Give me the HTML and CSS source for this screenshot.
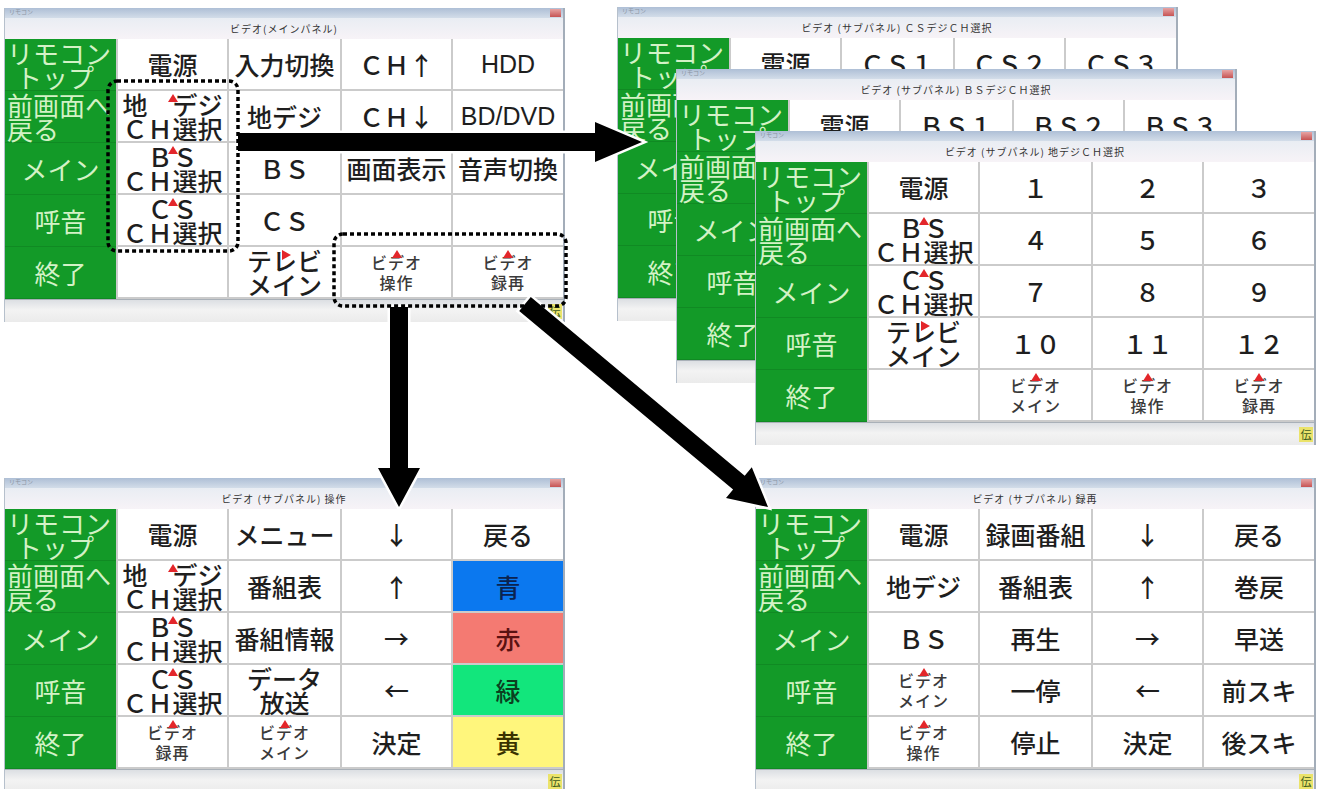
FILE: index.html
```html
<!DOCTYPE html>
<html lang="ja">
<head>
  <meta charset="UTF-8">
  <title>ビデオ パネル遷移</title>
  <link rel="stylesheet" href="styles.css">
</head>
<body>

<!-- CSデジ (back) -->
<section class="win win-cs">
  <div class="titlebar"><span class="sysname">リモコン</span><span class="close"></span></div>
  <div class="caption">ビデオ (サブパネル) ＣＳデジＣＨ選択</div>
  <div class="grid">
    <div class="side l"><span>リモコン<br><span class="ind">トップ</span></span></div>
    <div class="cell"><span>電源</span></div>
    <div class="cell"><span>ＣＳ１</span></div>
    <div class="cell"><span>ＣＳ２</span></div>
    <div class="cell"><span>ＣＳ３</span></div>

    <div class="side l"><span>前画面へ<br>戻る</span></div>
    <div class="cell two"><span>地　デジ<br>ＣＨ選択</span><i class="mk up"></i></div>
    <div class="cell"><span>ＣＳ４</span></div>
    <div class="cell"><span>ＣＳ５</span></div>
    <div class="cell"><span>ＣＳ６</span></div>

    <div class="side"><span>メイン</span></div>
    <div class="cell two"><span>ＢＳ<br>ＣＨ選択</span><i class="mk up"></i></div>
    <div class="cell"><span>ＣＳ７</span></div>
    <div class="cell"><span>ＣＳ８</span></div>
    <div class="cell"><span>ＣＳ９</span></div>

    <div class="side"><span>呼音</span></div>
    <div class="cell two"><span>テレビ<br>メイン</span><i class="mk right"></i></div>
    <div class="cell"><span>ＣＳ10</span></div>
    <div class="cell"><span>ＣＳ11</span></div>
    <div class="cell"><span>ＣＳ12</span></div>

    <div class="side"><span>終了</span></div>
    <div class="cell"></div>
    <div class="cell small"><span>ビデオ<br>メイン</span><i class="mk up"></i></div>
    <div class="cell small"><span>ビデオ<br>操作</span><i class="mk up"></i></div>
    <div class="cell small"><span>ビデオ<br>録再</span><i class="mk up"></i></div>
  </div>
  <div class="status"><span class="den">伝</span></div>
</section>

<!-- BSデジ (middle) -->
<section class="win win-bs">
  <div class="titlebar"><span class="sysname">リモコン</span><span class="close"></span></div>
  <div class="caption">ビデオ (サブパネル) ＢＳデジＣＨ選択</div>
  <div class="grid">
    <div class="side l"><span>リモコン<br><span class="ind">トップ</span></span></div>
    <div class="cell"><span>電源</span></div>
    <div class="cell"><span>ＢＳ１</span></div>
    <div class="cell"><span>ＢＳ２</span></div>
    <div class="cell"><span>ＢＳ３</span></div>

    <div class="side l"><span>前画面へ<br>戻る</span></div>
    <div class="cell two"><span>地　デジ<br>ＣＨ選択</span><i class="mk up"></i></div>
    <div class="cell"><span>ＢＳ４</span></div>
    <div class="cell"><span>ＢＳ５</span></div>
    <div class="cell"><span>ＢＳ６</span></div>

    <div class="side"><span>メイン</span></div>
    <div class="cell two"><span>ＣＳ<br>ＣＨ選択</span><i class="mk up"></i></div>
    <div class="cell"><span>ＢＳ７</span></div>
    <div class="cell"><span>ＢＳ８</span></div>
    <div class="cell"><span>ＢＳ９</span></div>

    <div class="side"><span>呼音</span></div>
    <div class="cell two"><span>テレビ<br>メイン</span><i class="mk right"></i></div>
    <div class="cell"><span>ＢＳ10</span></div>
    <div class="cell"><span>ＢＳ11</span></div>
    <div class="cell"><span>ＢＳ12</span></div>

    <div class="side"><span>終了</span></div>
    <div class="cell"></div>
    <div class="cell small"><span>ビデオ<br>メイン</span><i class="mk up"></i></div>
    <div class="cell small"><span>ビデオ<br>操作</span><i class="mk up"></i></div>
    <div class="cell small"><span>ビデオ<br>録再</span><i class="mk up"></i></div>
  </div>
  <div class="status"><span class="den">伝</span></div>
</section>

<!-- 地デジ (front) -->
<section class="win win-digi">
  <div class="titlebar"><span class="sysname">リモコン</span><span class="close"></span></div>
  <div class="caption">ビデオ (サブパネル) 地デジＣＨ選択</div>
  <div class="grid">
    <div class="side l"><span>リモコン<br><span class="ind">トップ</span></span></div>
    <div class="cell"><span>電源</span></div>
    <div class="cell"><span>１</span></div>
    <div class="cell"><span>２</span></div>
    <div class="cell"><span>３</span></div>

    <div class="side l"><span>前画面へ<br>戻る</span></div>
    <div class="cell two"><span>ＢＳ<br>ＣＨ選択</span><i class="mk up"></i></div>
    <div class="cell"><span>４</span></div>
    <div class="cell"><span>５</span></div>
    <div class="cell"><span>６</span></div>

    <div class="side"><span>メイン</span></div>
    <div class="cell two"><span>ＣＳ<br>ＣＨ選択</span><i class="mk up"></i></div>
    <div class="cell"><span>７</span></div>
    <div class="cell"><span>８</span></div>
    <div class="cell"><span>９</span></div>

    <div class="side"><span>呼音</span></div>
    <div class="cell two"><span>テレビ<br>メイン</span><i class="mk right"></i></div>
    <div class="cell"><span>１０</span></div>
    <div class="cell"><span>１１</span></div>
    <div class="cell"><span>１２</span></div>

    <div class="side"><span>終了</span></div>
    <div class="cell"></div>
    <div class="cell small"><span>ビデオ<br>メイン</span><i class="mk up"></i></div>
    <div class="cell small"><span>ビデオ<br>操作</span><i class="mk up"></i></div>
    <div class="cell small"><span>ビデオ<br>録再</span><i class="mk up"></i></div>
  </div>
  <div class="status"><span class="den">伝</span></div>
</section>

<!-- メインパネル -->
<section class="win win-main">
  <div class="titlebar"><span class="sysname">リモコン</span><span class="close"></span></div>
  <div class="caption">ビデオ(メインパネル)</div>
  <div class="grid">
    <div class="side l"><span>リモコン<br><span class="ind">トップ</span></span></div>
    <div class="cell"><span>電源</span></div>
    <div class="cell"><span>入力切換</span></div>
    <div class="cell"><span>ＣＨ↑</span></div>
    <div class="cell latin"><span>HDD</span></div>

    <div class="side l"><span>前画面へ<br>戻る</span></div>
    <div class="cell two"><span>地　デジ<br>ＣＨ選択</span><i class="mk up"></i></div>
    <div class="cell"><span>地デジ</span></div>
    <div class="cell"><span>ＣＨ↓</span></div>
    <div class="cell latin"><span>BD/DVD</span></div>

    <div class="side"><span>メイン</span></div>
    <div class="cell two"><span>ＢＳ<br>ＣＨ選択</span><i class="mk up"></i></div>
    <div class="cell"><span>ＢＳ</span></div>
    <div class="cell"><span>画面表示</span></div>
    <div class="cell"><span>音声切換</span></div>

    <div class="side"><span>呼音</span></div>
    <div class="cell two"><span>ＣＳ<br>ＣＨ選択</span><i class="mk up"></i></div>
    <div class="cell"><span>ＣＳ</span></div>
    <div class="cell"></div>
    <div class="cell"></div>

    <div class="side"><span>終了</span></div>
    <div class="cell"></div>
    <div class="cell two"><span>テレビ<br>メイン</span><i class="mk right"></i></div>
    <div class="cell small"><span>ビデオ<br>操作</span><i class="mk up"></i></div>
    <div class="cell small"><span>ビデオ<br>録再</span><i class="mk up"></i></div>
  </div>
  <div class="status"><span class="den">伝</span></div>
</section>

<!-- 操作 -->
<section class="win win-ops">
  <div class="titlebar"><span class="sysname">リモコン</span><span class="close"></span></div>
  <div class="caption">ビデオ (サブパネル) 操作</div>
  <div class="grid">
    <div class="side l"><span>リモコン<br><span class="ind">トップ</span></span></div>
    <div class="cell"><span>電源</span></div>
    <div class="cell"><span>メニュー</span></div>
    <div class="cell"><span>↓</span></div>
    <div class="cell"><span>戻る</span></div>

    <div class="side l"><span>前画面へ<br>戻る</span></div>
    <div class="cell two"><span>地　デジ<br>ＣＨ選択</span><i class="mk up"></i></div>
    <div class="cell"><span>番組表</span></div>
    <div class="cell"><span>↑</span></div>
    <div class="cell blue"><span>青</span></div>

    <div class="side"><span>メイン</span></div>
    <div class="cell two"><span>ＢＳ<br>ＣＨ選択</span><i class="mk up"></i></div>
    <div class="cell"><span>番組情報</span></div>
    <div class="cell"><span>→</span></div>
    <div class="cell red"><span>赤</span></div>

    <div class="side"><span>呼音</span></div>
    <div class="cell two"><span>ＣＳ<br>ＣＨ選択</span><i class="mk up"></i></div>
    <div class="cell two"><span>データ<br>放送</span></div>
    <div class="cell"><span>←</span></div>
    <div class="cell green"><span>緑</span></div>

    <div class="side"><span>終了</span></div>
    <div class="cell small"><span>ビデオ<br>録再</span><i class="mk up"></i></div>
    <div class="cell small"><span>ビデオ<br>メイン</span><i class="mk up"></i></div>
    <div class="cell"><span>決定</span></div>
    <div class="cell yellow"><span>黄</span></div>
  </div>
  <div class="status"><span class="den">伝</span></div>
</section>

<!-- 録再 -->
<section class="win win-rec">
  <div class="titlebar"><span class="sysname">リモコン</span><span class="close"></span></div>
  <div class="caption">ビデオ (サブパネル) 録再</div>
  <div class="grid">
    <div class="side l"><span>リモコン<br><span class="ind">トップ</span></span></div>
    <div class="cell"><span>電源</span></div>
    <div class="cell"><span>録画番組</span></div>
    <div class="cell"><span>↓</span></div>
    <div class="cell"><span>戻る</span></div>

    <div class="side l"><span>前画面へ<br>戻る</span></div>
    <div class="cell"><span>地デジ</span></div>
    <div class="cell"><span>番組表</span></div>
    <div class="cell"><span>↑</span></div>
    <div class="cell"><span>巻戻</span></div>

    <div class="side"><span>メイン</span></div>
    <div class="cell"><span>ＢＳ</span></div>
    <div class="cell"><span>再生</span></div>
    <div class="cell"><span>→</span></div>
    <div class="cell"><span>早送</span></div>

    <div class="side"><span>呼音</span></div>
    <div class="cell small"><span>ビデオ<br>メイン</span><i class="mk up"></i></div>
    <div class="cell"><span>一停</span></div>
    <div class="cell"><span>←</span></div>
    <div class="cell"><span>前スキ</span></div>

    <div class="side"><span>終了</span></div>
    <div class="cell small"><span>ビデオ<br>操作</span><i class="mk up"></i></div>
    <div class="cell"><span>停止</span></div>
    <div class="cell"><span>決定</span></div>
    <div class="cell"><span>後スキ</span></div>
  </div>
  <div class="status"><span class="den">伝</span></div>
</section>

<!-- arrows and dotted marks drawn over the windows -->
<svg class="overlay" width="1319" height="789" viewBox="0 0 1319 789">
  <g fill="#000" stroke="#fff" stroke-width="5" stroke-linejoin="miter" paint-order="stroke">
    <polygon points="238,133 595,133 595,122 642,142 595,162 595,151 238,151"/>
    <polygon points="390,307 408,307 408,468 420,468 399,507 378,468 390,468"/>
    <polygon points="530.8,297.1 744.7,475.7 751.8,467.3 768,507 726,497.9 733.1,489.5 519.2,310.9"/>
  </g>
  <g fill="none" stroke="#000" stroke-width="3.5" stroke-dasharray="4 3">
    <rect x="108" y="81" width="130" height="170" rx="9"/>
    <rect x="334" y="234" width="232" height="72" rx="9"/>
  </g>
</svg>

</body>
</html>
```

FILE: styles.css
```css
* {
  box-sizing: border-box;
}
body {
  margin: 0;
  width: 1319px;
  height: 789px;
  overflow: hidden;
  position: relative;
  background-color: #fff;
  font-family: "Noto Sans CJK JP", "Noto Sans", sans-serif;
}

/* windows sit on a free canvas */
.win {
  position: absolute;
  width: 561px;
  height: 314px;
  display: flex;
  flex-direction: column;
  background-color: #f0f0f0;
  border-left: 1px solid #b6c0cc;
  border-right: 2px solid #a3adb9;
}
.win-cs { left: 617px; top: 7px; }
.win-bs { left: 676px; top: 69px; }
.win-digi { left: 755px; top: 131px; }
.win-main { left: 4px; top: 8px; }
.win-ops { left: 4px; top: 478px; }
.win-rec { left: 755px; top: 478px; }

.titlebar {
  height: 10px;
  position: relative;
  background: linear-gradient(#aebfd6, #d3dde9);
}
.sysname {
  position: absolute;
  left: 4px;
  top: 0;
  font-size: 6px;
  line-height: 7px;
  color: #8a94a2;
}
.close {
  position: absolute;
  right: 2px;
  top: 1px;
  width: 11px;
  height: 8px;
  background: linear-gradient(#e7a4a4, #c65454);
}
.caption {
  height: 21px;
  line-height: 21px;
  text-align: center;
  font-size: 10px;
  letter-spacing: 1px;
  color: #333;
  background: linear-gradient(#e9edf3, #f7f3f7);
}

.grid {
  display: grid;
  grid-template-columns: 111px 111px 113px 111px 1fr;
  grid-auto-rows: 52px;
  background-color: #fff;
}
.cell {
  position: relative;
  display: flex;
  align-items: center;
  justify-content: center;
  text-align: center;
  border-left: 2px solid #cbcbcb;
  border-bottom: 2px solid #cbcbcb;
  font-size: 25px;
  line-height: 26px;
  font-weight: 500;
  color: #1e1e1e;
  white-space: nowrap;
}
.cell.two {
  line-height: 24px;
}
.cell.small {
  font-size: 16px;
  line-height: 20px;
  letter-spacing: 1px;
  color: #3a3a3a;
}
.cell.latin {
  font-family: "Liberation Sans", Arial, sans-serif;
  font-size: 25px;
}
.cell.blue { background-color: #0b78ef; color: #0b2350; }
.cell.red { background-color: #f47a72; color: #5a1212; }
.cell.green { background-color: #12e67c; color: #0b3f1f; }
.cell.yellow { background-color: #fff67c; color: #3a3300; }

.side {
  display: flex;
  align-items: center;
  justify-content: center;
  background-color: #139a28;
  border-bottom: 1px solid #108a23;
  color: #d3f2c6;
  font-size: 26px;
  line-height: 24px;
  white-space: nowrap;
}
.side.l {
  justify-content: flex-start;
  padding-left: 2px;
}
.ind {
  padding-left: 9px;
}

/* red link markers */
.mk {
  position: absolute;
  left: 50%;
  width: 0;
  height: 0;
}
.mk.up {
  top: 3px;
  margin-left: -5px;
  border-left: 5px solid transparent;
  border-right: 5px solid transparent;
  border-bottom: 8px solid #e3262a;
}
.mk.right {
  top: 3px;
  margin-left: -3px;
  border-top: 5px solid transparent;
  border-bottom: 5px solid transparent;
  border-left: 9px solid #e3262a;
}

.status {
  flex: 1;
  position: relative;
  background: linear-gradient(#dcdfe3, #f3f3f3 45%, #ebebeb);
  border-top: 1px solid #a9b0b8;
}
.den {
  position: absolute;
  right: 1px;
  bottom: 3px;
  width: 14px;
  height: 15px;
  background-color: #ebe36a;
  font-size: 11px;
  line-height: 15px;
  text-align: center;
  color: #3d5a1e;
}

.overlay {
  position: absolute;
  left: 0;
  top: 0;
}
```
